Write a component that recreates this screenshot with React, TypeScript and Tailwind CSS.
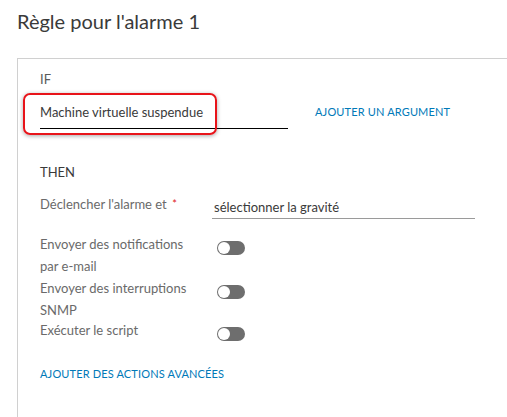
import React from "react";

const font = { fontFamily: "Lato, 'Open Sans', sans-serif" };

function Toggle() {
  return (
    <div className="relative h-[14px] w-[28px] rounded-full bg-[#6e6e6e]">
      <div className="absolute left-[1px] top-[1px] h-[12px] w-[12px] rounded-full bg-white" />
    </div>
  );
}

function ToggleRow({ lines }: { lines: string[] }) {
  return (
    <div className="flex items-start">
      <div className="w-[177px] text-[13px] leading-[22px] text-[#6a6a6a]">
        {lines.map((l) => (
          <div key={l}>{l}</div>
        ))}
      </div>
      <div className="pt-[8px]">
        <Toggle />
      </div>
    </div>
  );
}

export default function App() {
  return (
    <div className="h-[417px] w-[507px] overflow-hidden bg-white" style={font}>
      <h1 className="pl-[17px] pt-[8px] text-[20px] leading-[26px] text-[#3a3a3a]">
        Règle pour l'alarme 1
      </h1>
      <div className="ml-[17px] mt-[24px] border-l border-t border-[#d0d0d0] pl-[22px] pt-[10px]">
        <div className="text-[13px] leading-[20px] text-[#5a5a5a]">IF</div>
        <div className="relative mt-[14px] flex items-start">
          {/* annotation highlight */}
          <div className="absolute -left-[17px] -top-[10px] h-[42px] w-[194px] rounded-[7px] border-2 border-[#e8141a] shadow-[0_1px_4px_rgba(0,0,0,0.35)]" />
          <div className="w-[248px] border-b border-black pb-[7px] text-[13px] leading-[18px] text-[#3a3a3a]">
            Machine virtuelle suspendue
          </div>
          <div className="ml-[27px] text-[11px] leading-[18px] tracking-[0.15px] text-[#0079b8]">
            AJOUTER UN ARGUMENT
          </div>
        </div>
        <div className="mt-[33px] text-[13px] leading-[20px] text-[#3a3a3a]">THEN</div>
        <div className="mt-[12px] flex items-start">
          <div className="w-[172px] text-[13px] leading-[20px] text-[#6a6a6a]">
            Déclencher l'alarme et <span className="ml-[2px] align-top text-[11px] text-[#e02020]">*</span>
          </div>
          <div className="mt-[4px] w-[263px] border-b border-[#9a9a9a] pb-[2px] pl-[2px] text-[13px] leading-[18px] text-[#3a3a3a]">
            sélectionner la gravité
          </div>
        </div>
        <div className="mt-[14px] flex flex-col">
          <ToggleRow lines={["Envoyer des notifications", "par e-mail"]} />
          <ToggleRow lines={["Envoyer des interruptions", "SNMP"]} />
          <div className="-mt-[2px]">
            <ToggleRow lines={["Exécuter le script"]} />
          </div>
        </div>
        <div className="mt-[24px] text-[11px] leading-[18px] tracking-[0.15px] text-[#0079b8]">
          AJOUTER DES ACTIONS AVANCÉES
        </div>
        <div className="h-[60px]" />
      </div>
    </div>
  );
}
